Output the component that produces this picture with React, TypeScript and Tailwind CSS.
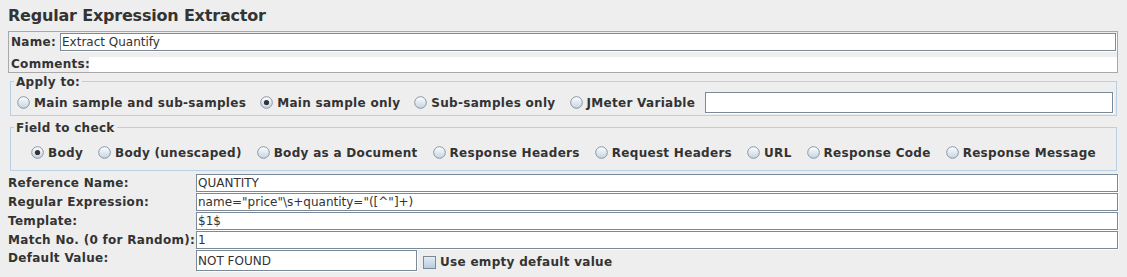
import { useId } from 'react'

/** Bouton radio façon Metal/Ocean (Swing). */
function Radio({ checked = false }: { checked?: boolean }) {
  const id = useId()
  return (
    <svg width="13" height="13" viewBox="0 0 13 13" className="shrink-0">
      <defs>
        <linearGradient id={id} x1="0" y1="0" x2="0" y2="1">
          <stop offset="0" stopColor="#ffffff" />
          <stop offset="1" stopColor="#c4d2e0" />
        </linearGradient>
      </defs>
      <circle cx="6.5" cy="6.5" r="5.8" fill={`url(#${id})`} stroke="#8796a5" strokeWidth="1" />
      {checked && <circle cx="6.5" cy="6.5" r="2.6" fill="#333333" />}
    </svg>
  )
}

function Checkbox() {
  const id = useId()
  return (
    <svg width="13" height="13" viewBox="0 0 13 13" className="shrink-0">
      <defs>
        <linearGradient id={id} x1="0" y1="0" x2="0" y2="1">
          <stop offset="0" stopColor="#e4edf6" />
          <stop offset="1" stopColor="#b9cbdd" />
        </linearGradient>
      </defs>
      <rect x="0.5" y="0.5" width="12" height="12" fill={`url(#${id})`} stroke="#7a8a99" />
    </svg>
  )
}

function Option({ label, checked = false }: { label: string; checked?: boolean }) {
  return (
    <label className="flex items-center gap-[4px] whitespace-nowrap">
      <Radio checked={checked} />
      <span className="leading-[14px]">{label}</span>
    </label>
  )
}

// Champ texte (bordure Flush3D : trait sombre + liseré blanc en bas/droite)
function Field({ value = '', className = '' }: { value?: string; className?: string }) {
  return (
    <div
      className={`border border-[#7a8a99] bg-white shadow-[1px_1px_0_#ffffff] pl-[1px] text-[12px] font-normal tracking-normal leading-[16px] whitespace-pre overflow-hidden ${className}`}
    >
      {value}
    </div>
  )
}

const FIELDS = [
  { label: 'Reference Name:', value: 'QUANTITY' },
  { label: 'Regular Expression:', value: 'name="price"\\s+quantity="([^"]+)' },
  { label: 'Template:', value: '$1$' },
  { label: 'Match No. (0 for Random):', value: '1' },
]

const CHECK_FIELDS = [
  'Body',
  'Body (unescaped)',
  'Body as a Document',
  'Response Headers',
  'Request Headers',
  'URL',
  'Response Code',
  'Response Message',
]

export default function App() {
  return (
    <div className="w-[1127px] h-[277px] overflow-hidden bg-[#eeeeee] text-[#333333] font-['DejaVu_Sans',sans-serif] text-[12px] font-bold tracking-[0.3px]">
      {/* Titre */}
      <div className="h-[31px] pt-[7px] pl-[8px] text-[16px] leading-[18px] tracking-[-0.2px]">
        Regular Expression Extractor
      </div>

      {/* Nom / commentaires */}
      <div className="ml-[8px] w-[1110px] h-[42px] border border-[#a8a8a8]">
        <div className="flex items-start h-[20px] pt-[1px] pl-[2px]">
          <span className="w-[49px] leading-[18px]">Name:</span>
          <Field value="Extract Quantify" className="flex-1 h-[18px] mr-[1px]" />
        </div>
        <div className="flex items-start h-[20px] pt-[5px] pl-[2px]">
          <span className="w-[78px] leading-[14px]">Comments:</span>
          <div className="flex-1 h-[15px] bg-white" />
        </div>
      </div>

      {/* Apply to */}
      <fieldset className="ml-[10px] w-[1107px] border border-[#b8cfe5]">
        <legend className="ml-[3px] px-[2px] pt-[2px] leading-[14px]">Apply to:</legend>
        <div className="flex items-center h-[26px] pt-[3px] pb-[2px] pl-[6px] pr-[3px]">
          <div className="flex items-center gap-[14px]">
            <Option label="Main sample and sub-samples" />
            <Option label="Main sample only" checked />
            <Option label="Sub-samples only" />
            <Option label="JMeter Variable" />
          </div>
          <Field className="flex-1 ml-[10px] h-[21px]" />
        </div>
      </fieldset>

      {/* Field to check */}
      <fieldset className="mt-[3px] ml-[10px] w-[1107px] border border-[#b8cfe5]">
        <legend className="ml-[3px] px-[2px] pt-[2px] leading-[14px]">Field to check</legend>
        <div className="flex items-center justify-center gap-[15px] h-[35px]">
          {CHECK_FIELDS.map((f, i) => (
            <Option key={f} label={f} checked={i === 0} />
          ))}
        </div>
      </fieldset>

      {/* Champs du bas */}
      <div className="mt-[3px] pl-[8px] flex flex-col gap-[1px]">
        {FIELDS.map((f) => (
          <div key={f.label} className="flex items-start h-[18px]">
            <span className="w-[188px] leading-[18px] whitespace-nowrap">{f.label}</span>
            <Field value={f.value} className="w-[922px] h-[18px]" />
          </div>
        ))}
        <div className="flex items-start h-[21px]">
          <span className="w-[188px] leading-[16px]">Default Value:</span>
          <Field value="NOT FOUND" className="w-[221px] h-[21px] pt-[2px]" />
          <label className="ml-[6px] pt-[5px] flex items-center gap-[4px] whitespace-nowrap">
            <Checkbox />
            <span className="leading-[14px]">Use empty default value</span>
          </label>
        </div>
      </div>
    </div>
  )
}
